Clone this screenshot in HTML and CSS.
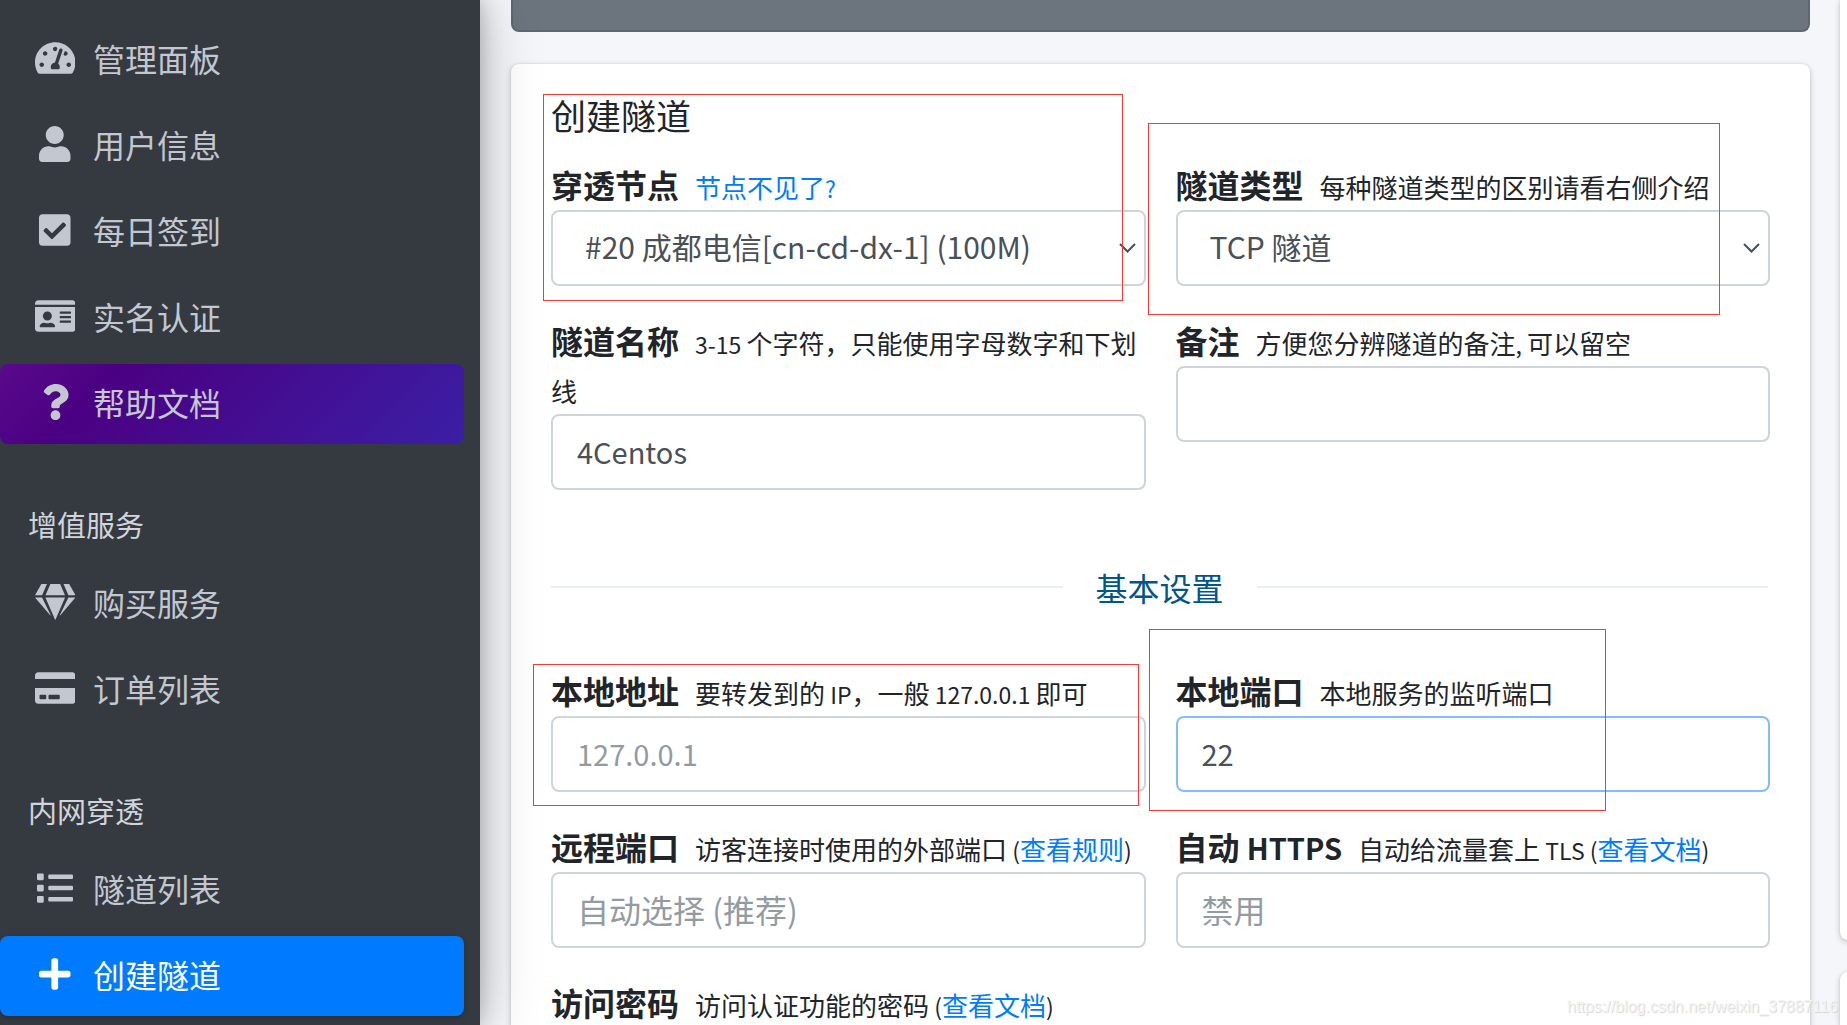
FILE: index.html
```html
<!DOCTYPE html>
<html lang="zh-CN">
<head>
<meta charset="utf-8">
<title>创建隧道</title>
<link rel="stylesheet" href="styles.css">
</head>
<body>
<div class="app">
  <nav class="sidebar">
    <a class="nav-item" href="#"><span class="nav-icon"><svg viewBox="0 0 576 512"><path d="M288 32C128.94 32 0 160.94 0 320c0 52.8 14.25 102.26 39.06 144.8 5.61 9.62 16.3 15.2 27.44 15.2h443c11.14 0 21.83-5.58 27.44-15.2C561.75 422.26 576 372.8 576 320c0-159.06-128.94-288-288-288zm0 64c14.71 0 26.58 10.13 30.32 23.65-1.11 2.26-2.64 4.23-3.45 6.67l-9.22 27.67c-5.13 3.49-10.97 6.01-17.64 6.01-17.67 0-32-14.33-32-32S270.33 96 288 96zM96 384c-17.67 0-32-14.33-32-32s14.33-32 32-32 32 14.33 32 32-14.33 32-32 32zm48-160c-17.67 0-32-14.33-32-32s14.33-32 32-32 32 14.33 32 32-14.33 32-32 32zm246.77-72.41l-61.33 184C343.13 347.33 352 364.54 352 384c0 11.72-3.38 22.55-8.88 32H232.88c-5.5-9.45-8.88-20.28-8.88-32 0-33.94 26.5-61.43 59.9-63.59l61.34-184.01c4.17-12.56 17.73-19.45 30.36-15.17 12.57 4.19 19.35 17.79 15.17 30.36zm14.66 57.2l15.52-46.55c3.47-1.29 7.13-2.23 11.05-2.23 17.67 0 32 14.33 32 32s-14.33 32-32 32c-11.38-.01-20.89-6.28-26.57-15.22zM480 384c-17.67 0-32-14.33-32-32s14.33-32 32-32 32 14.33 32 32-14.33 32-32 32z"/></svg></span>管理面板</a>
    <a class="nav-item" href="#"><span class="nav-icon"><svg viewBox="0 0 448 512"><path d="M224 256c70.7 0 128-57.3 128-128S294.7 0 224 0 96 57.3 96 128s57.3 128 128 128zm89.6 32h-16.7c-22.2 10.2-46.9 16-72.9 16s-50.6-5.8-72.9-16h-16.7C60.2 288 0 348.2 0 422.4V464c0 26.5 21.5 48 48 48h352c26.5 0 48-21.5 48-48v-41.6c0-74.2-60.2-134.4-134.4-134.4z"/></svg></span>用户信息</a>
    <a class="nav-item" href="#"><span class="nav-icon"><svg viewBox="0 0 448 512"><path d="M400 480H48c-26.51 0-48-21.49-48-48V80c0-26.51 21.49-48 48-48h352c26.51 0 48 21.49 48 48v352c0 26.51-21.49 48-48 48zm-204.686-98.059l184-184c6.248-6.248 6.248-16.379 0-22.627l-22.627-22.627c-6.248-6.248-16.379-6.249-22.628 0L184 302.745l-70.059-70.059c-6.248-6.248-16.379-6.248-22.628 0l-22.627 22.627c-6.248 6.248-6.248 16.379 0 22.627l104 104c6.249 6.25 16.379 6.25 22.628.001z"/></svg></span>每日签到</a>
    <a class="nav-item" href="#"><span class="nav-icon"><svg viewBox="0 0 576 512"><path fill-rule="evenodd" d="M528 32H48C21.5 32 0 53.5 0 80v16h576V80c0-26.5-21.5-48-48-48zM0 432c0 26.5 21.5 48 48 48h480c26.5 0 48-21.5 48-48V128H0v304zm352-232c0-4.400 3.600-8 8-8h144c4.400 0 8 3.600 8 8v16c0 4.400-3.600 8-8 8H360c-4.400 0-8-3.600-8-8v-16zm0 64c0-4.400 3.600-8 8-8h144c4.400 0 8 3.600 8 8v16c0 4.400-3.600 8-8 8H360c-4.400 0-8-3.600-8-8v-16zm0 64c0-4.400 3.600-8 8-8h144c4.400 0 8 3.600 8 8v16c0 4.400-3.600 8-8 8H360c-4.400 0-8-3.600-8-8v-16zM176 192c35.300 0 64 28.700 64 64s-28.700 64-64 64-64-28.700-64-64 28.700-64 64-64zM67.100 396.200C75.500 370.500 99.600 352 128 352h8.200c12.300 5.100 25.700 8 39.800 8s27.600-2.900 39.800-8h8.200c28.400 0 52.500 18.500 60.900 44.200 3.200 9.900-5.200 19.800-15.600 19.800H82.700c-10.400 0-18.800-10-15.600-19.800z"/></svg></span>实名认证</a>
    <a class="nav-item nav-item-help" href="#"><span class="nav-icon"><svg viewBox="0 0 384 512"><path d="M202.021 0C122.202 0 70.503 32.703 29.914 91.026c-7.363 10.58-5.093 25.086 5.178 32.874l43.138 32.709c10.373 7.865 25.132 6.026 33.253-4.148 25.049-31.381 43.63-49.449 82.757-49.449 30.764 0 68.816 19.799 68.816 49.631 0 22.552-18.617 34.134-48.993 51.164-35.423 19.86-82.299 44.576-82.299 106.405V320c0 13.255 10.745 24 24 24h72.471c13.255 0 24-10.745 24-24v-5.773c0-42.86 125.268-44.645 125.268-160.627C377.504 66.256 286.902 0 202.021 0zM192 373.459c-38.196 0-69.271 31.075-69.271 69.271 0 38.195 31.075 69.27 69.271 69.27s69.271-31.075 69.271-69.271-31.075-69.27-69.271-69.27z"/></svg></span>帮助文档</a>
    <div class="nav-header">增值服务</div>
    <a class="nav-item" href="#"><span class="nav-icon"><svg viewBox="0 0 576 512"><path d="M485.5 0L576 160H474.9L405.7 0h79.8zm-128 0l69.2 160H149.3L218.5 0h139zm-267 0h79.8l-69.2 160H0L90.5 0zM0 192h100.7l123 251.7c1.5 3.1-2.7 5.9-5 3.3L0 192zm148.2 0h279.6l-137 318.2c-1 2.400-4.500 2.400-5.500 0L148.200 192zm204.1 251.7l123-251.7H576L357.3 446.9c-2.300 2.700-6.500-.1-5-3.200z"/></svg></span>购买服务</a>
    <a class="nav-item" href="#"><span class="nav-icon"><svg viewBox="0 0 576 512"><path fill-rule="evenodd" d="M0 432c0 26.5 21.5 48 48 48h480c26.5 0 48-21.5 48-48V256H0v176zm192-68c0-6.6 5.4-12 12-12h136c6.6 0 12 5.4 12 12v40c0 6.6-5.4 12-12 12H204c-6.6 0-12-5.4-12-12v-40zm-128 0c0-6.6 5.4-12 12-12h72c6.6 0 12 5.4 12 12v40c0 6.6-5.4 12-12 12H76c-6.6 0-12-5.4-12-12v-40zM576 80v48H0V80c0-26.5 21.5-48 48-48h480c26.5 0 48 21.5 48 48z"/></svg></span>订单列表</a>
    <div class="nav-header">内网穿透</div>
    <a class="nav-item" href="#"><span class="nav-icon"><svg viewBox="0 0 512 512"><path d="M80 368H16a16 16 0 0 0-16 16v64a16 16 0 0 0 16 16h64a16 16 0 0 0 16-16v-64a16 16 0 0 0-16-16zm0-320H16A16 16 0 0 0 0 64v64a16 16 0 0 0 16 16h64a16 16 0 0 0 16-16V64a16 16 0 0 0-16-16zm0 160H16a16 16 0 0 0-16 16v64a16 16 0 0 0 16 16h64a16 16 0 0 0 16-16v-64a16 16 0 0 0-16-16zm416 176H176a16 16 0 0 0-16 16v32a16 16 0 0 0 16 16h320a16 16 0 0 0 16-16v-32a16 16 0 0 0-16-16zm0-320H176a16 16 0 0 0-16 16v32a16 16 0 0 0 16 16h320a16 16 0 0 0 16-16V80a16 16 0 0 0-16-16zm0 160H176a16 16 0 0 0-16 16v32a16 16 0 0 0 16 16h320a16 16 0 0 0 16-16v-32a16 16 0 0 0-16-16z"/></svg></span>隧道列表</a>
    <a class="nav-item nav-item-active" href="#"><span class="nav-icon"><svg viewBox="0 0 448 512"><path d="M416 208H272V64c0-17.67-14.33-32-32-32h-32c-17.67 0-32 14.33-32 32v144H32c-17.67 0-32 14.33-32 32v32c0 17.67 14.33 32 32 32h144v144c0 17.67 14.33 32 32 32h32c17.67 0 32-14.33 32-32V304h144c17.67 0 32-14.33 32-32v-32c0-17.67-14.33-32-32-32z"/></svg></span>创建隧道</a>
  </nav>

  <div class="content">
    <main class="primary">
      <div class="notice"></div>
      <form class="card">
        <h1 class="card-title">创建隧道</h1>
        <div class="fields">
          <div class="field">
            <div class="field-head"><label class="name" for="node">穿透节点</label><span class="hint"><a href="#">节点不见了<span class="latin">?</span></a></span></div>
            <div class="select-wrap">
              <select id="node" class="control"><option>#20 成都电信[cn-cd-dx-1] (100M)</option></select>
              <svg class="caret" viewBox="0 0 17 10"><path d="M1 1l7.500 7.500L16 1"/></svg>
            </div>
          </div>
          <div class="field">
            <div class="field-head"><label class="name" for="type">隧道类型</label><span class="hint">每种隧道类型的区别请看右侧介绍</span></div>
            <div class="select-wrap">
              <select id="type" class="control"><option>TCP 隧道</option></select>
              <svg class="caret" viewBox="0 0 17 10"><path d="M1 1l7.500 7.500L16 1"/></svg>
            </div>
          </div>
          <div class="field">
            <div class="field-head"><label class="name" for="tunnel-name">隧道名称</label><span class="hint"><span class="latin">3-15 </span>个字符，只能使用字母数字和下划线</span></div>
            <input id="tunnel-name" class="control control-latin" type="text" value="4Centos">
          </div>
          <div class="field">
            <div class="field-head"><label class="name" for="remark">备注</label><span class="hint">方便您分辨隧道的备注<span class="latin">, </span>可以留空</span></div>
            <input id="remark" class="control" type="text">
          </div>
        </div>
        <h2 class="divider">基本设置</h2>
        <div class="fields">
          <div class="field">
            <div class="field-head"><label class="name" for="local-ip">本地地址</label><span class="hint">要转发到的<span class="latin"> IP</span>，一般<span class="latin"> 127.0.0.1 </span>即可</span></div>
            <input id="local-ip" class="control control-latin" type="text" placeholder="127.0.0.1">
          </div>
          <div class="field">
            <div class="field-head"><label class="name" for="local-port">本地端口</label><span class="hint">本地服务的监听端口</span></div>
            <input id="local-port" class="control control-latin control-current" type="text" value="22">
          </div>
          <div class="field">
            <div class="field-head"><label class="name" for="remote-port">远程端口</label><span class="hint">访客连接时使用的外部端口<span class="latin"> (</span><a href="#">查看规则</a><span class="latin">)</span></span></div>
            <input id="remote-port" class="control" type="text" placeholder="自动选择 (推荐)">
          </div>
          <div class="field">
            <div class="field-head"><label class="name" for="https">自动 <span class="latin">HTTPS</span></label><span class="hint">自动给流量套上<span class="latin"> TLS (</span><a href="#">查看文档</a><span class="latin">)</span></span></div>
            <input id="https" class="control" type="text" placeholder="禁用">
          </div>
          <div class="field">
            <div class="field-head"><label class="name" for="password">访问密码</label><span class="hint">访问认证功能的密码<span class="latin"> (</span><a href="#">查看文档</a><span class="latin">)</span></span></div>
            <input id="password" class="control" type="text">
          </div>
        </div>
      </form>
    </main>
    <aside class="secondary">
      <div class="side-card"></div>
      <div class="side-card side-card-next"></div>
    </aside>
  </div>

  <div class="mark mark-node"></div>
  <div class="mark mark-type"></div>
  <div class="mark mark-ip"></div>
  <div class="mark mark-port"></div>
  <div class="watermark">https://blog.csdn.net/weixin_37887116</div>
</div>
</body>
</html>
```
FILE: styles.css
```css
* { box-sizing: border-box; }

body {
  margin: 0;
  background: #f4f6f9;
  color: #212529;
  font-family: "Noto Sans CJK SC", sans-serif;
  font-size: 32px;
  line-height: 48px;
}

a { color: #007bff; text-decoration: none; }

.app {
  position: relative;
  display: flex;
  height: 100vh;
  overflow: hidden;
}

/* Sidebar */
.sidebar {
  position: relative;
  z-index: 1;
  flex: 0 0 480px;
  padding: 20px 16px 0 0;
  background: #343a40;
  box-shadow: 0 0 56px rgba(0, 0, 0, .25), 0 0 20px rgba(0, 0, 0, .22);
}

.nav-item {
  display: flex;
  align-items: center;
  height: 80px;
  margin-bottom: 6px;
  padding: 0 0 4px 30px;
  border-radius: 8px;
  color: #c2c7d0;
}

.nav-icon {
  display: flex;
  justify-content: center;
  width: 50px;
  margin-right: 13px;
}

.nav-icon svg {
  display: block;
  height: 36px;
  fill: currentColor;
}

.nav-item-help { background: linear-gradient(135deg, #5a0a8c 0, #4b0082 22%, #3a1fa5 100%); }

.nav-item-active {
  background: #007bff;
  color: #fff;
  box-shadow: 0 2px 6px rgba(0, 0, 0, .2);
}

.nav-header {
  padding: 55px 0 21px 28px;
  color: #d0d4db;
  font-size: 29px;
  line-height: 38px;
}

/* Content */
.content {
  display: flex;
  flex: 1;
  gap: 30px;
  min-width: 0;
  padding-left: 31px;
}

.primary { flex: 0 0 calc(100% - 37px); }

.notice {
  height: 32px;
  margin-bottom: 32px;
  border: 2px solid #5f6870;
  border-top: 0;
  border-radius: 0 0 8px 8px;
  background: #6c757d;
}

.card,
.side-card {
  border-radius: 8px;
  background: #fff;
  box-shadow: 0 0 2px rgba(0, 0, 0, .13), 0 2px 6px rgba(0, 0, 0, .2);
}

.card { padding: 30px 40px 40px; }

.card-title {
  margin: 0 0 24px;
  font-size: 35px;
  font-weight: 400;
  line-height: 42px;
}

.fields {
  display: grid;
  grid-template-columns: 1fr 1fr;
  align-items: start;
  gap: 30px;
}

.field-head { margin-bottom: 2px; }

/* Smaller line heights keep mixed sizes from stretching the 48px line */
.name {
  margin-right: 16px;
  font-weight: 700;
  line-height: 24px;
}

.name .latin { font-size: 29px; }

.hint { font-size: 26px; line-height: 24px; }
.hint .latin { font-size: 23px; }

.control {
  display: block;
  width: 100%;
  height: 76px;
  padding: 0 24px 2px;
  border: 2px solid #ced4da;
  border-radius: 8px;
  background: #fff;
  color: #495057;
  font-family: inherit;
  font-size: 32px;
}

.control::placeholder { color: #939ba2; opacity: 1; }
.control-latin { font-size: 29px; }
.control-current { border-color: #80bdff; }

.select-wrap { display: grid; align-items: center; }
.select-wrap > * { grid-area: 1 / 1; }

select.control {
  padding: 0 32px 4px;
  font-size: 30px;
  appearance: none;
}

.caret {
  justify-self: end;
  width: 17px;
  height: 10px;
  margin-right: 10px;
  fill: none;
  stroke: #495057;
  stroke-width: 2;
  pointer-events: none;
}

.divider {
  display: flex;
  align-items: center;
  gap: 33px;
  margin: 0;
  padding: 73px 2px 55px 0;
  color: #00558b;
  font-size: 32px;
  font-weight: 400;
}

.divider::before,
.divider::after {
  content: "";
  flex: 1;
  height: 2px;
  background: #e8f1ef;
}

/* Right column */
.secondary {
  display: grid;
  flex: 0 0 400px;
  grid-template-rows: 1fr 53px;
  gap: 32px;
}

.side-card { border-top-left-radius: 0; }
.side-card-next { border-radius: 8px 8px 0 0; }

/* Annotations drawn over the form */
.mark {
  position: absolute;
  z-index: 2;
  border: 1px solid #f43a37;
  pointer-events: none;
}

.mark-node { left: 543px; top: 94px; width: 580px; height: 207px; }
.mark-type { left: 1148px; top: 123px; width: 572px; height: 192px; }
.mark-ip { left: 533px; top: 664px; width: 606px; height: 142px; }
.mark-port { left: 1149px; top: 629px; width: 457px; height: 182px; }

.watermark {
  position: absolute;
  z-index: 2;
  right: 9px;
  bottom: 8px;
  color: #f4f4f4;
  font-family: "Liberation Sans", sans-serif;
  font-size: 16px;
  line-height: 20px;
  text-shadow: 1px 1px 1px #d4d4d4;
}
```
